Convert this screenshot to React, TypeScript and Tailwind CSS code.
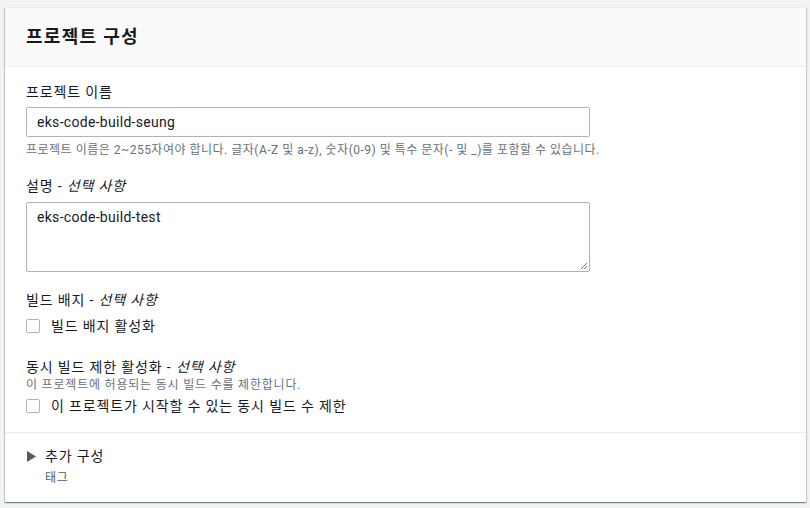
import React from "react";

const font = { fontFamily: 'Roboto, "Noto Sans CJK KR", sans-serif' };

function Checkbox({ label, mt }: { label: string; mt: string }) {
  return (
    <label className={`flex items-center h-[22px] ${mt}`}>
      <span className="w-[14px] h-[14px] border border-[#aab7b8] rounded-[2px] bg-white shrink-0" />
      <span className="ml-[11px] text-[14px] leading-[22px] tracking-[0.85px] text-[#16191f]">{label}</span>
    </label>
  );
}

export default function App() {
  return (
    <div className="w-[810px] h-[508px] bg-[#f2f3f3] pt-[7px] pl-[5px] pr-[4px]" style={font}>
      <div className="bg-white border-t border-[#eaeded] shadow-[0_1px_1px_0_rgba(0,28,36,0.3),1px_1px_1px_0_rgba(0,28,36,0.15),-1px_1px_1px_0_rgba(0,28,36,0.15)]">
        <div className="h-[59px] bg-[#fafafa] border-b border-[#eaeded] px-[21px] flex items-center">
          <h2 className="text-[18px] font-bold tracking-[1.3px] text-[#16191f] leading-[22px]">프로젝트 구성</h2>
        </div>
        <div className="px-[21px] pt-[14px] pb-[15px] border-b border-[#eaeded]">
          <div className="text-[14px] leading-[22px] tracking-[0.85px] text-[#16191f]">프로젝트 이름</div>
          <div className="mt-[4px] w-[564px] h-[30px] border border-[#aab7b8] rounded-[2px] bg-white flex items-center px-[10px] text-[14px] tracking-[0.3px] text-[#16191f]">
            eks-code-build-seung
          </div>
          <div className="mt-[5px] text-[12px] leading-[16px] tracking-[0.5px] text-[#687078]">
            프로젝트 이름은 2~255자여야 합니다. 글자(A-Z 및 a-z), 숫자(0-9) 및 특수 문자(- 및 _)를 포함할 수 있습니다.
          </div>

          <div className="mt-[17px] text-[14px] leading-[22px] tracking-[0.85px] text-[#16191f]">
            설명 - <i>선택 사항</i>
          </div>
          <div className="mt-[5px] relative w-[564px] h-[70px] border border-[#aab7b8] rounded-[2px] bg-white px-[10px] pt-[3px] text-[14px] leading-[22px] tracking-[0.3px] text-[#16191f]">
            eks-code-build-test
            <svg className="absolute right-[1px] bottom-[1px]" width="9" height="9" viewBox="0 0 9 9">
              <path d="M8 2 L2 8 M8 5 L5 8" stroke="#777" strokeWidth="1" />
            </svg>
          </div>

          <div className="mt-[17px] text-[14px] leading-[22px] tracking-[0.85px] text-[#16191f]">
            빌드 배지 - <i>선택 사항</i>
          </div>
          <Checkbox label="빌드 배지 활성화" mt="mt-[4px]" />

          <div className="mt-[20px] text-[14px] leading-[20px] tracking-[0.85px] text-[#16191f]">
            동시 빌드 제한 활성화 - <i>선택 사항</i>
          </div>
          <div className="text-[12px] leading-[16px] tracking-[0.8px] text-[#687078]">이 프로젝트에 허용되는 동시 빌드 수를 제한합니다.</div>
          <Checkbox label="이 프로젝트가 시작할 수 있는 동시 빌드 수 제한" mt="mt-[2px]" />
        </div>
        <div className="px-[21px] pt-[13px] pb-[14px]">
          <div className="flex items-center h-[20px]">
            <svg width="9" height="11" viewBox="0 0 9 11" className="ml-[1px]">
              <path d="M0 0 L9 5.5 L0 11 Z" fill="#545b64" />
            </svg>
            <span className="ml-[9px] text-[14px] leading-[20px] tracking-[0.85px] text-[#16191f]">추가 구성</span>
          </div>
          <div className="mt-[2px] pl-[19px] text-[12px] leading-[20px] tracking-[0.8px] text-[#545b64]">태그</div>
        </div>
      </div>
    </div>
  );
}
